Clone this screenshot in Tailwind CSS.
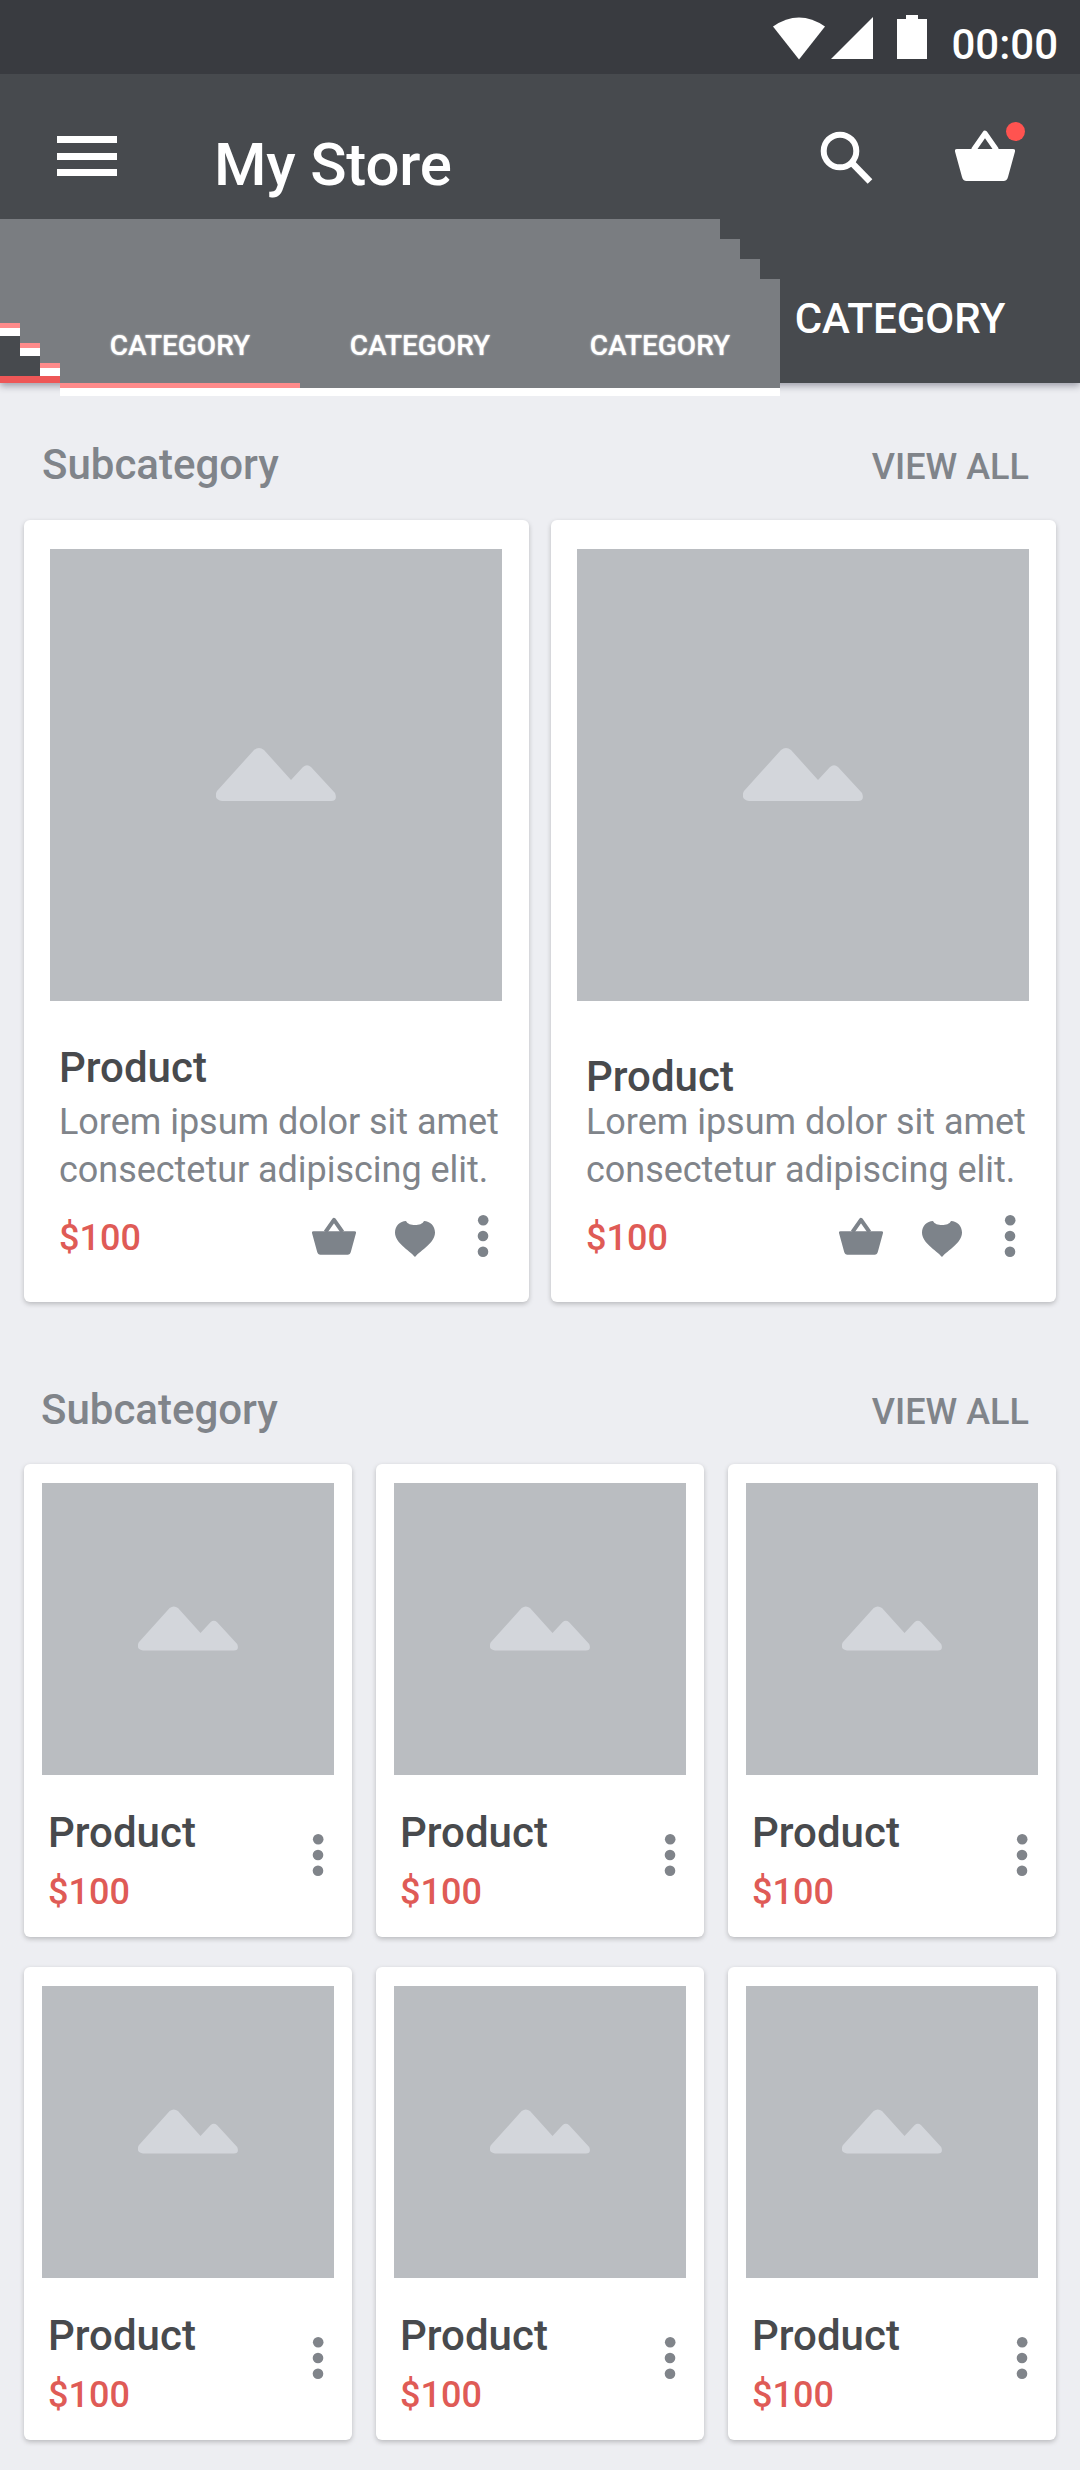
<!DOCTYPE html>
<html lang="en">
<head>
<meta charset="utf-8">
<title>My Store</title>
<script src="https://cdn.jsdelivr.net/npm/@tailwindcss/browser@4"></script>
</head>
<body class="w-[1080px] h-[2470px] overflow-hidden bg-[#edeef2] font-['Roboto',sans-serif] text-[#80848a]">

<!-- Shared icons -->
<svg class="hidden">
  <symbol id="basket" viewBox="0 0 60 51">
    <path d="M18.5 20 30 3.5 41.500 20" fill="none" stroke="currentColor" stroke-width="5.500" stroke-linejoin="round"/>
    <path d="M2 19H58Q60.500 19 60 21.500L53 47Q52 51 48.500 51H11.500Q8 51 7 47L0 21.500Q-.5 19 2 19Z" fill="currentColor"/>
  </symbol>
  <symbol id="heart" viewBox="0 0 40 36">
    <path d="M20 36C14 29 0 22 0 11.500C0 5 5 0 11 0C12.500 3 16 4 20 4S27.500 3 29 0C35 0 40 5 40 11.500C40 22 26 29 20 36Z" fill="currentColor"/>
  </symbol>
  <symbol id="dots" viewBox="0 0 12 42">
    <g fill="currentColor"><circle cx="6.200" cy="5.300" r="5.300"/><circle cx="6" cy="21" r="5.300"/><circle cx="6" cy="36.700" r="5.300"/></g>
  </symbol>
  <symbol id="hills" viewBox="0 0 120 53">
    <path d="M38 2Q43-2 48 2L75 32L87 19Q91 15.500 95 19L119 45Q122 53 115 53H6Q-3 51 1 43Z" fill="currentColor"/>
  </symbol>
</svg>

<header class="relative h-[383px] bg-[#474a4e] text-white shadow-[0_3px_7px_rgba(40,40,60,0.4)]">
  <!-- Status bar -->
  <div class="flex h-[74px] justify-end bg-[#393b40] pr-[22px]">
    <svg class="mt-[14px] h-[46px] w-[156px]" viewBox="0 0 156 46" fill="#fff">
      <path d="M0 12.500Q26-5.500 52 12.500L26 45.500Z"/>
      <path d="M58 45H100V3Z"/>
      <path d="M124 5H133V1H145V5H154V45H124Z"/>
    </svg>
    <span class="ml-[22px] mt-[21px] text-[42px] font-medium leading-[48px]">00:00</span>
  </div>

  <!-- App bar -->
  <div class="flex h-[177px] pl-[57px] pr-[65px]">
    <div class="mt-[62px] flex h-[40px] w-[60px] flex-col justify-between">
      <i class="h-[7px] bg-white"></i><i class="h-[7px] bg-white"></i><i class="h-[7px] bg-white"></i>
    </div>
    <h1 class="ml-[97px] mt-[55px] text-[60px] font-medium leading-[72px] tracking-[-0.2px]">My Store</h1>
    <svg class="ml-auto mt-[57px] h-[54px] w-[54px]" viewBox="0 0 54 54" fill="none" stroke="#fff">
      <circle cx="20" cy="20" r="16.300" stroke-width="6"/><path d="M32 32 50 50.500" stroke-width="6.500"/>
    </svg>
    <div class="relative ml-[81px] mt-[56px] h-[51px] w-[60px]">
      <svg class="h-[51px] w-[60px]"><use href="#basket"/></svg>
      <i class="absolute -right-[10px] -top-[8px] size-[19px] rounded-full bg-[#ff5350]"></i>
    </div>
  </div>

  <!-- Tabs -->
  <nav class="grid h-[132px] grid-cols-3 text-center text-[42px] font-medium leading-[48px]">
    <span class="border-b-[7px] border-[#ee5757]"></span>
    <span></span>
    <span class="pt-[44px]">CATEGORY</span>
  </nav>

  <!-- Cascading tab strips layered over the tab row -->
  <div class="absolute left-0 top-[219px] h-[117px] w-[720px] bg-white">
    <div class="h-[109px] bg-[#7a7d81] pt-[104px]"><div class="h-[5px] w-[240px] bg-[#ff8b8b]"></div></div>
  </div>
  <div class="absolute left-[20px] top-[239px] h-[117px] w-[720px] bg-white">
    <div class="h-[109px] bg-[#7a7d81] pt-[104px]"><div class="h-[5px] w-[240px] bg-[#ff8b8b]"></div></div>
  </div>
  <div class="absolute left-[40px] top-[259px] h-[117px] w-[720px] bg-white">
    <div class="h-[109px] bg-[#7a7d81] pt-[104px]"><div class="h-[5px] w-[240px] bg-[#ff8b8b]"></div></div>
  </div>
  <div class="absolute left-[60px] top-[279px] h-[117px] w-[720px] bg-white">
    <div class="h-[109px] bg-[#7a7d81] pt-[50px]">
      <div class="grid h-[54px] grid-cols-3 text-center text-[28px] font-medium leading-[34px] [text-shadow:0_0_2px_#ffffffcc]">
        <span>CATEGORY</span><span>CATEGORY</span><span>CATEGORY</span>
      </div>
      <div class="h-[5px] w-[240px] bg-[#ff8b8b]"></div>
    </div>
  </div>
</header>

<main class="px-[24px]">
  <section>
    <div class="flex h-[137px] items-baseline justify-between pl-[18px] pr-[27px] pt-[58px]">
      <h2 class="text-[42px] font-medium leading-[48px]">Subcategory</h2>
      <a class="text-[36px] font-medium leading-[40px]">VIEW ALL</a>
    </div>
    <div class="grid grid-cols-2 gap-[22px]">
      <article class="h-[782px] rounded-[6px] bg-white px-[26px] pt-[29px] shadow-[0_2px_5px_rgba(0,0,0,0.22)]">
        <div class="flex h-[452px] w-[452px] justify-center bg-[#babdc1] pt-[199px] text-[#d3d6db]"><svg class="h-[53px] w-[120px]"><use href="#hills"/></svg></div>
        <div class="pl-[9px]">
          <h3 class="h-[97px] pt-[43px] text-[42px] font-medium leading-[48px] text-[#484a4d]">Product</h3>
          <p class="whitespace-nowrap text-[36px] leading-[48px] tracking-[-0.03px]">Lorem ipsum dolor sit amet<br>consectetur adipiscing elit.</p>
          <div class="mt-[21px] flex h-[42px] items-center pr-[14px]">
            <span class="pt-[3px] text-[36px] font-medium leading-[42px] text-[#df5b56]">$100</span>
            <svg class="ml-auto h-[38px] w-[44px] text-[#7d838a]"><use href="#basket"/></svg>
            <svg class="ml-[39px] mt-[6px] h-[36px] w-[40px] text-[#7d838a]"><use href="#heart"/></svg>
            <svg class="ml-[42px] h-[42px] w-[12px] text-[#7d838a]"><use href="#dots"/></svg>
          </div>
        </div>
      </article>
      <article class="h-[782px] rounded-[6px] bg-white px-[26px] pt-[29px] shadow-[0_2px_5px_rgba(0,0,0,0.22)]">
        <div class="flex h-[452px] w-[452px] justify-center bg-[#babdc1] pt-[199px] text-[#d3d6db]"><svg class="h-[53px] w-[120px]"><use href="#hills"/></svg></div>
        <div class="pl-[9px]">
          <h3 class="h-[97px] pt-[52px] text-[42px] font-medium leading-[48px] text-[#484a4d]">Product</h3>
          <p class="whitespace-nowrap text-[36px] leading-[48px] tracking-[-0.03px]">Lorem ipsum dolor sit amet<br>consectetur adipiscing elit.</p>
          <div class="mt-[21px] flex h-[42px] items-center pr-[14px]">
            <span class="pt-[3px] text-[36px] font-medium leading-[42px] text-[#df5b56]">$100</span>
            <svg class="ml-auto h-[38px] w-[44px] text-[#7d838a]"><use href="#basket"/></svg>
            <svg class="ml-[39px] mt-[6px] h-[36px] w-[40px] text-[#7d838a]"><use href="#heart"/></svg>
            <svg class="ml-[42px] h-[42px] w-[12px] text-[#7d838a]"><use href="#dots"/></svg>
          </div>
        </div>
      </article>
    </div>
  </section>

  <section>
    <div class="flex h-[162px] items-baseline justify-between pl-[17px] pr-[27px] pt-[84px]">
      <h2 class="text-[42px] font-medium leading-[48px]">Subcategory</h2>
      <a class="text-[36px] font-medium leading-[40px]">VIEW ALL</a>
    </div>
    <div class="grid grid-cols-3 gap-x-[24px] gap-y-[30px]">
      <article class="h-[473px] rounded-[6px] bg-white px-[18px] pt-[19px] shadow-[0_2px_5px_rgba(0,0,0,0.22)]">
        <div class="flex h-[292px] justify-center bg-[#babdc1] pt-[123px] text-[#d3d6db]"><svg class="h-[45px] w-[100px]"><use href="#hills"/></svg></div>
        <div class="flex justify-between pl-[6px] pr-[10px] pt-[34px]">
          <div><h3 class="text-[42px] font-medium leading-[48px] text-[#484a4d]">Product</h3>
          <p class="mt-[15px] text-[36px] font-medium leading-[40px] text-[#df5b56]">$100</p></div>
          <svg class="mt-[25px] h-[42px] w-[12px]"><use href="#dots"/></svg>
        </div>
      </article>
      <article class="h-[473px] rounded-[6px] bg-white px-[18px] pt-[19px] shadow-[0_2px_5px_rgba(0,0,0,0.22)]">
        <div class="flex h-[292px] justify-center bg-[#babdc1] pt-[123px] text-[#d3d6db]"><svg class="h-[45px] w-[100px]"><use href="#hills"/></svg></div>
        <div class="flex justify-between pl-[6px] pr-[10px] pt-[34px]">
          <div><h3 class="text-[42px] font-medium leading-[48px] text-[#484a4d]">Product</h3>
          <p class="mt-[15px] text-[36px] font-medium leading-[40px] text-[#df5b56]">$100</p></div>
          <svg class="mt-[25px] h-[42px] w-[12px]"><use href="#dots"/></svg>
        </div>
      </article>
      <article class="h-[473px] rounded-[6px] bg-white px-[18px] pt-[19px] shadow-[0_2px_5px_rgba(0,0,0,0.22)]">
        <div class="flex h-[292px] justify-center bg-[#babdc1] pt-[123px] text-[#d3d6db]"><svg class="h-[45px] w-[100px]"><use href="#hills"/></svg></div>
        <div class="flex justify-between pl-[6px] pr-[10px] pt-[34px]">
          <div><h3 class="text-[42px] font-medium leading-[48px] text-[#484a4d]">Product</h3>
          <p class="mt-[15px] text-[36px] font-medium leading-[40px] text-[#df5b56]">$100</p></div>
          <svg class="mt-[25px] h-[42px] w-[12px]"><use href="#dots"/></svg>
        </div>
      </article>
      <article class="h-[473px] rounded-[6px] bg-white px-[18px] pt-[19px] shadow-[0_2px_5px_rgba(0,0,0,0.22)]">
        <div class="flex h-[292px] justify-center bg-[#babdc1] pt-[123px] text-[#d3d6db]"><svg class="h-[45px] w-[100px]"><use href="#hills"/></svg></div>
        <div class="flex justify-between pl-[6px] pr-[10px] pt-[34px]">
          <div><h3 class="text-[42px] font-medium leading-[48px] text-[#484a4d]">Product</h3>
          <p class="mt-[15px] text-[36px] font-medium leading-[40px] text-[#df5b56]">$100</p></div>
          <svg class="mt-[25px] h-[42px] w-[12px]"><use href="#dots"/></svg>
        </div>
      </article>
      <article class="h-[473px] rounded-[6px] bg-white px-[18px] pt-[19px] shadow-[0_2px_5px_rgba(0,0,0,0.22)]">
        <div class="flex h-[292px] justify-center bg-[#babdc1] pt-[123px] text-[#d3d6db]"><svg class="h-[45px] w-[100px]"><use href="#hills"/></svg></div>
        <div class="flex justify-between pl-[6px] pr-[10px] pt-[34px]">
          <div><h3 class="text-[42px] font-medium leading-[48px] text-[#484a4d]">Product</h3>
          <p class="mt-[15px] text-[36px] font-medium leading-[40px] text-[#df5b56]">$100</p></div>
          <svg class="mt-[25px] h-[42px] w-[12px]"><use href="#dots"/></svg>
        </div>
      </article>
      <article class="h-[473px] rounded-[6px] bg-white px-[18px] pt-[19px] shadow-[0_2px_5px_rgba(0,0,0,0.22)]">
        <div class="flex h-[292px] justify-center bg-[#babdc1] pt-[123px] text-[#d3d6db]"><svg class="h-[45px] w-[100px]"><use href="#hills"/></svg></div>
        <div class="flex justify-between pl-[6px] pr-[10px] pt-[34px]">
          <div><h3 class="text-[42px] font-medium leading-[48px] text-[#484a4d]">Product</h3>
          <p class="mt-[15px] text-[36px] font-medium leading-[40px] text-[#df5b56]">$100</p></div>
          <svg class="mt-[25px] h-[42px] w-[12px]"><use href="#dots"/></svg>
        </div>
      </article>
    </div>
  </section>
</main>
</body>
</html>
